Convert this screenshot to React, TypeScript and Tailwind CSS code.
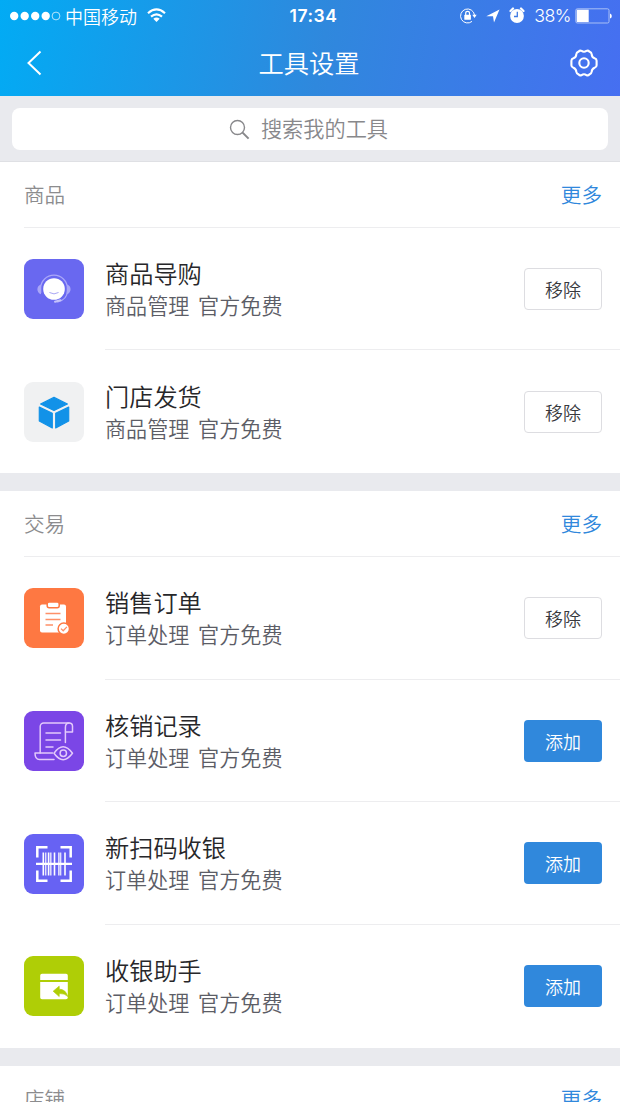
import React from 'react';

interface Tool {
  name: string;
  category: string;
  added: boolean;
  iconBg: string;
  icon: React.ReactNode;
}

interface Section {
  title: string;
  tools: Tool[];
}

function HeadsetIcon() {
  return (
    <svg viewBox="0 0 60 60" className="w-full h-full" fill="none">
      <path d="M17 25.500c-4.800 1-4.800 8.500 0 9.700zM43 25.500c4.800 1 4.800 8.500 0 9.700z" fill="#a9a6f8" />
      <path d="M16.700 34V29a13.300 12.800 0 0 1 26.600 0v3c0 5-3.500 9.500-10 11.200" stroke="#aaa7f8" strokeWidth="1.200" />
      <path d="M31 42.800l5.500-1.600" stroke="#c4c2fb" strokeWidth="2" strokeLinecap="round" />
      <circle cx="30" cy="30" r="10.800" fill="#fff" />
      <path d="M25.800 33.700q4.200 2.600 8.400 0" stroke="#a9a6f5" strokeWidth="1" strokeLinecap="round" />
    </svg>
  );
}

function BoxIcon() {
  return (
    <svg viewBox="0 0 60 60" className="w-full h-full" fill="#1292e8" stroke="#1292e8" strokeWidth="1.200" strokeLinejoin="round">
      <path d="M30 15.400L43.400 22 30 28.400 16.600 22z" />
      <path d="M15.300 25L28.300 31.200V46L15.300 39z" />
      <path d="M44.700 25L31.700 31.200V46L44.700 39z" />
    </svg>
  );
}

function OrderIcon() {
  return (
    <svg viewBox="0 0 60 60" className="w-full h-full" fill="none">
      <rect x="16" y="16.500" width="26" height="28" rx="2" fill="#fff" />
      <rect x="23.200" y="14" width="12" height="5.800" rx="2" fill="#fff" stroke="#fe7842" strokeWidth="1.500" />
      <path d="M21.500 25.500h15M21.500 31.500h15M21.500 37h7.500" stroke="#fe9068" strokeWidth="1.500" />
      <circle cx="39.800" cy="40.700" r="5.700" fill="#fff" stroke="#fe7842" strokeWidth="1.500" />
      <path d="M37 40.600l2.200 2.200 3.700-3.900" stroke="#fe9068" strokeWidth="1.300" />
    </svg>
  );
}

function RecordIcon() {
  return (
    <svg viewBox="0 0 60 60" className="w-full h-full" fill="none" stroke="#e3c9fb" strokeWidth="1.500" strokeLinejoin="round" strokeLinecap="round">
      <path d="M16.200 42V15.500a3.500 3.500 0 0 1 3.500-3.500h25.500a3.300 3.300 0 0 1 3.300 3.300V21h-7" />
      <path d="M45 12q-3.600 0-3.600 4.500V31.500" />
      <path d="M22 22h14.500M22 29h14.500M22 36h7" />
      <path d="M30 48.500H15.500c-3 0-4.500-2.500-4.500-6.500h17.500" />
      <path d="M30 42.300q9-13 18.500 0q-9.500 12.700-18.500 0z" />
      <circle cx="39.300" cy="42.300" r="3.200" />
    </svg>
  );
}

function BarcodeIcon() {
  return (
    <svg viewBox="0 0 60 60" className="w-full h-full" fill="none" stroke="#fff">
      <path d="M23.500 13.300H13.300V23.500M36.500 13.300H46.700V23.500M13.300 36.500V46.700H23.500M46.700 36.500V46.700H36.500" strokeWidth="2.500" />
      <path d="M12 29.900h36" strokeWidth="2.300" />
      <path d="M19.300 18.500v23M24.600 18.500v23M30.500 18.500v23M41 18.500v23" strokeWidth="1.600" />
      <path d="M21.700 18.500v23M26.800 18.500v23M34.800 18.500v23M36.600 18.500v23" strokeWidth="1.500" strokeOpacity=".8" />
    </svg>
  );
}

function CashierIcon() {
  return (
    <svg viewBox="0 0 60 60" className="w-full h-full">
      <path d="M18 17.700h24a1.800 1.800 0 0 1 1.800 1.800V24H16.200v-4.500a1.800 1.800 0 0 1 1.800-1.800zM16.200 26h27.600v15.500a1.800 1.800 0 0 1-1.800 1.800H18a1.800 1.800 0 0 1-1.800-1.800z" fill="#fff" />
      <path d="M29.200 35.200l6-5v3q6.500 0 8.600 7.300q-3-3.400-8.600-3v3z" fill="#afce06" stroke="#afce06" strokeWidth=".7" />
    </svg>
  );
}

const sections: Section[] = [
  {
    title: '商品',
    tools: [
      { name: '商品导购', category: '商品管理', added: true, iconBg: 'bg-[#6968f0]', icon: <HeadsetIcon /> },
      { name: '门店发货', category: '商品管理', added: true, iconBg: 'bg-[#f0f1f2]', icon: <BoxIcon /> },
    ],
  },
  {
    title: '交易',
    tools: [
      { name: '销售订单', category: '订单处理', added: true, iconBg: 'bg-[#fe7842]', icon: <OrderIcon /> },
      { name: '核销记录', category: '订单处理', added: false, iconBg: 'bg-[#7b46e6]', icon: <RecordIcon /> },
      { name: '新扫码收银', category: '订单处理', added: false, iconBg: 'bg-[#6762f3]', icon: <BarcodeIcon /> },
      { name: '收银助手', category: '订单处理', added: false, iconBg: 'bg-[#afce06]', icon: <CashierIcon /> },
    ],
  },
  { title: '店铺', tools: [] },
];

function StatusBar() {
  return (
    <div className="grid grid-cols-[1fr_auto_1fr] items-center h-[31px] pl-[10px] pr-[8px] text-white">
      <div className="flex items-center">
        <svg width="51" height="12" viewBox="0 0 51 12" fill="#fff">
          <circle cx="4.200" cy="6" r="4.200" />
          <circle cx="14.700" cy="6" r="4.200" />
          <circle cx="25.200" cy="6" r="4.200" />
          <circle cx="35.700" cy="6" r="4.200" />
          <circle cx="46" cy="6" r="3.900" fill="none" stroke="#fff" strokeWidth=".7" />
        </svg>
        <span className="ml-1 text-[18px] leading-none font-[350]">中国移动</span>
        <svg className="ml-[10px]" width="19" height="15" viewBox="0 0 19 15" fill="none" stroke="#fff" strokeWidth="2.200">
          <path d="M1 5.200q8.500-7.500 17 0M4 8.700q5.500-4.700 11 0" />
          <path d="M6.300 10.800q3.200-2.400 6.400 0L9.500 14z" fill="#fff" stroke="none" />
        </svg>
      </div>
      <span className="font-['Inter'] font-semibold text-[17.500px] leading-none tracking-[0.500px] ml-[5px]">17:34</span>
      <div className="flex items-center justify-end">
        <svg width="18" height="18" viewBox="0 0 18 18" fill="none" stroke="#fff">
          <path d="M15.500 8a7 7 0 1 0-2.500 6.400" strokeWidth="1" />
          <path d="M13.300 7.800h4.400L15.500 11z" fill="#fff" stroke="none" />
          <rect x="5.300" y="7.800" width="6.600" height="5" rx=".6" fill="#fff" stroke="none" />
          <path d="M6.700 8V6.300a1.900 1.900 0 0 1 3.800 0V8" strokeWidth="1.200" />
        </svg>
        <svg className="ml-[9px]" width="14" height="14" viewBox="0 0 14 14" fill="#fff">
          <path d="M13.500.5L8 13.500 7 7.300H.3z" />
        </svg>
        <svg className="ml-[9px]" width="16" height="17" viewBox="0 0 16 17" fill="none">
          <path d="M1.500 4l2.500-2.500M14.500 4l-2.500-2.500" stroke="#fff" strokeWidth="2.200" strokeLinecap="round" />
          <circle cx="8" cy="9" r="6.900" fill="#fff" />
          <path d="M8.300 4.800v4.700H5" stroke="#407be4" strokeWidth="1.300" />
        </svg>
        <span className="ml-[9px] font-['Inter'] font-light text-[17.800px] leading-none tracking-[-0.500px]">38%</span>
        <svg className="ml-[4px]" width="37" height="16" viewBox="0 0 37 16" fill="none">
          <rect x=".8" y=".8" width="33.200" height="14.200" rx="1.500" stroke="#b4c8f6" strokeWidth=".9" />
          <rect x="1.700" y="1.700" width="12" height="12.400" fill="#fff" />
          <path d="M35 5.500q1.800.5 1.800 2.500t-1.800 2.500z" fill="#fff" />
        </svg>
      </div>
    </div>
  );
}

function Header() {
  return (
    <header className="h-[96px] bg-linear-[100deg,#02abf4_0%,#2f88dd_52%,#466ff1_100%]">
      <StatusBar />
      <div className="flex items-center justify-between h-[64px] pl-[26px] pr-[22px] text-white">
        <svg width="22" height="26" viewBox="0 0 22 26" fill="none" stroke="#fff" strokeWidth="2">
          <path d="M14.500 1.500L2.500 13l12 11.500" />
        </svg>
        <h1 className="text-[25.300px] leading-none font-[350]">工具设置</h1>
        <svg width="28" height="28" viewBox="0 0 28 28" fill="none" stroke="#fff" strokeWidth="2.100" strokeLinejoin="round">
          <path d="M8.700 2.500Q10 1 11.600 1.900Q14 3.600 16.400 1.900Q18 1 19.300 2.500Q21.600 3.600 21.700 5.200Q21.800 8.300 24.600 9.300Q26.600 9.900 26.600 11.800V16.200Q26.600 18.100 24.600 18.700Q21.800 19.700 21.700 22.800Q21.600 24.400 19.300 25.500Q18 27 16.400 26.100Q14 24.400 11.600 26.100Q10 27 8.700 25.500Q6.400 24.400 6.300 22.800Q6.200 19.700 3.400 18.700Q1.400 18.100 1.400 16.200V11.800Q1.400 9.900 3.400 9.300Q6.200 8.300 6.300 5.200Q6.400 3.600 8.700 2.500z" />
          <circle cx="14" cy="14" r="4.700" />
        </svg>
      </div>
    </header>
  );
}

function SearchBar() {
  return (
    <div className="h-[66px] px-3 pt-3 bg-[#e9eaee] border-b border-[#dfe0e4]">
      <div className="flex items-center justify-center h-[42px] pr-[3px] rounded-lg bg-white text-[#88888b]">
        <svg width="21" height="21" viewBox="0 0 21 21" fill="none" stroke="currentColor">
          <circle cx="8.500" cy="8.500" r="7" strokeWidth="1.400" />
          <path d="M13.600 13.600l6 6" strokeWidth="2" />
        </svg>
        <span className="ml-[11px] mb-[2px] text-[21.200px] leading-none font-[350]">搜索我的工具</span>
      </div>
    </div>
  );
}

function ToolRow({ tool, last }: { tool: Tool; last: boolean }) {
  return (
    <li className="flex h-[122.700px] pl-6">
      <div className={`mt-[31.300px] w-[60px] h-[60px] shrink-0 rounded-[9px] overflow-hidden ${tool.iconBg}`}>
        {tool.icon}
      </div>
      <div className={`flex flex-1 items-center justify-between ml-[21px] pr-[18px] ${last ? '' : 'border-b border-[#ededef]'}`}>
        <div>
          <h3 className="text-[24.200px] leading-[33px] font-[350] text-[#27272a]">{tool.name}</h3>
          <p className="text-[21.100px] leading-[33px] font-[350] text-[#5c5d66] [word-spacing:4px]">{tool.category} 官方免费</p>
        </div>
        <button
          className={`w-[78px] h-[42px] rounded text-[18px] leading-none font-[350] ${
            tool.added ? 'bg-white border-[1.500px] border-[#dddde1] text-[#38393d]' : 'bg-[#3088dc] text-white'
          }`}
        >
          {tool.added ? '移除' : '添加'}
        </button>
      </div>
    </li>
  );
}

function ToolSection({ section }: { section: Section }) {
  return (
    <section className="bg-white">
      <div className="h-[65.800px] pl-6">
        <div className="flex items-center justify-between h-full pr-[18px] border-b border-[#ededef] text-[20.600px] font-[350]">
          <h2 className="text-[#8c8c8e]">{section.title}</h2>
          <a className="text-[#3088dc]">更多</a>
        </div>
      </div>
      <ul>
        {section.tools.map((tool, i) => (
          <ToolRow key={tool.name} tool={tool} last={i === section.tools.length - 1} />
        ))}
      </ul>
    </section>
  );
}

export default function App() {
  return (
    <div className="w-full h-screen overflow-hidden bg-[#e9eaee] font-['Noto_Sans_CJK_SC',sans-serif]">
      <Header />
      <SearchBar />
      <main className="flex flex-col gap-[18px]">
        {sections.map((section) => (
          <ToolSection key={section.title} section={section} />
        ))}
      </main>
    </div>
  );
}
